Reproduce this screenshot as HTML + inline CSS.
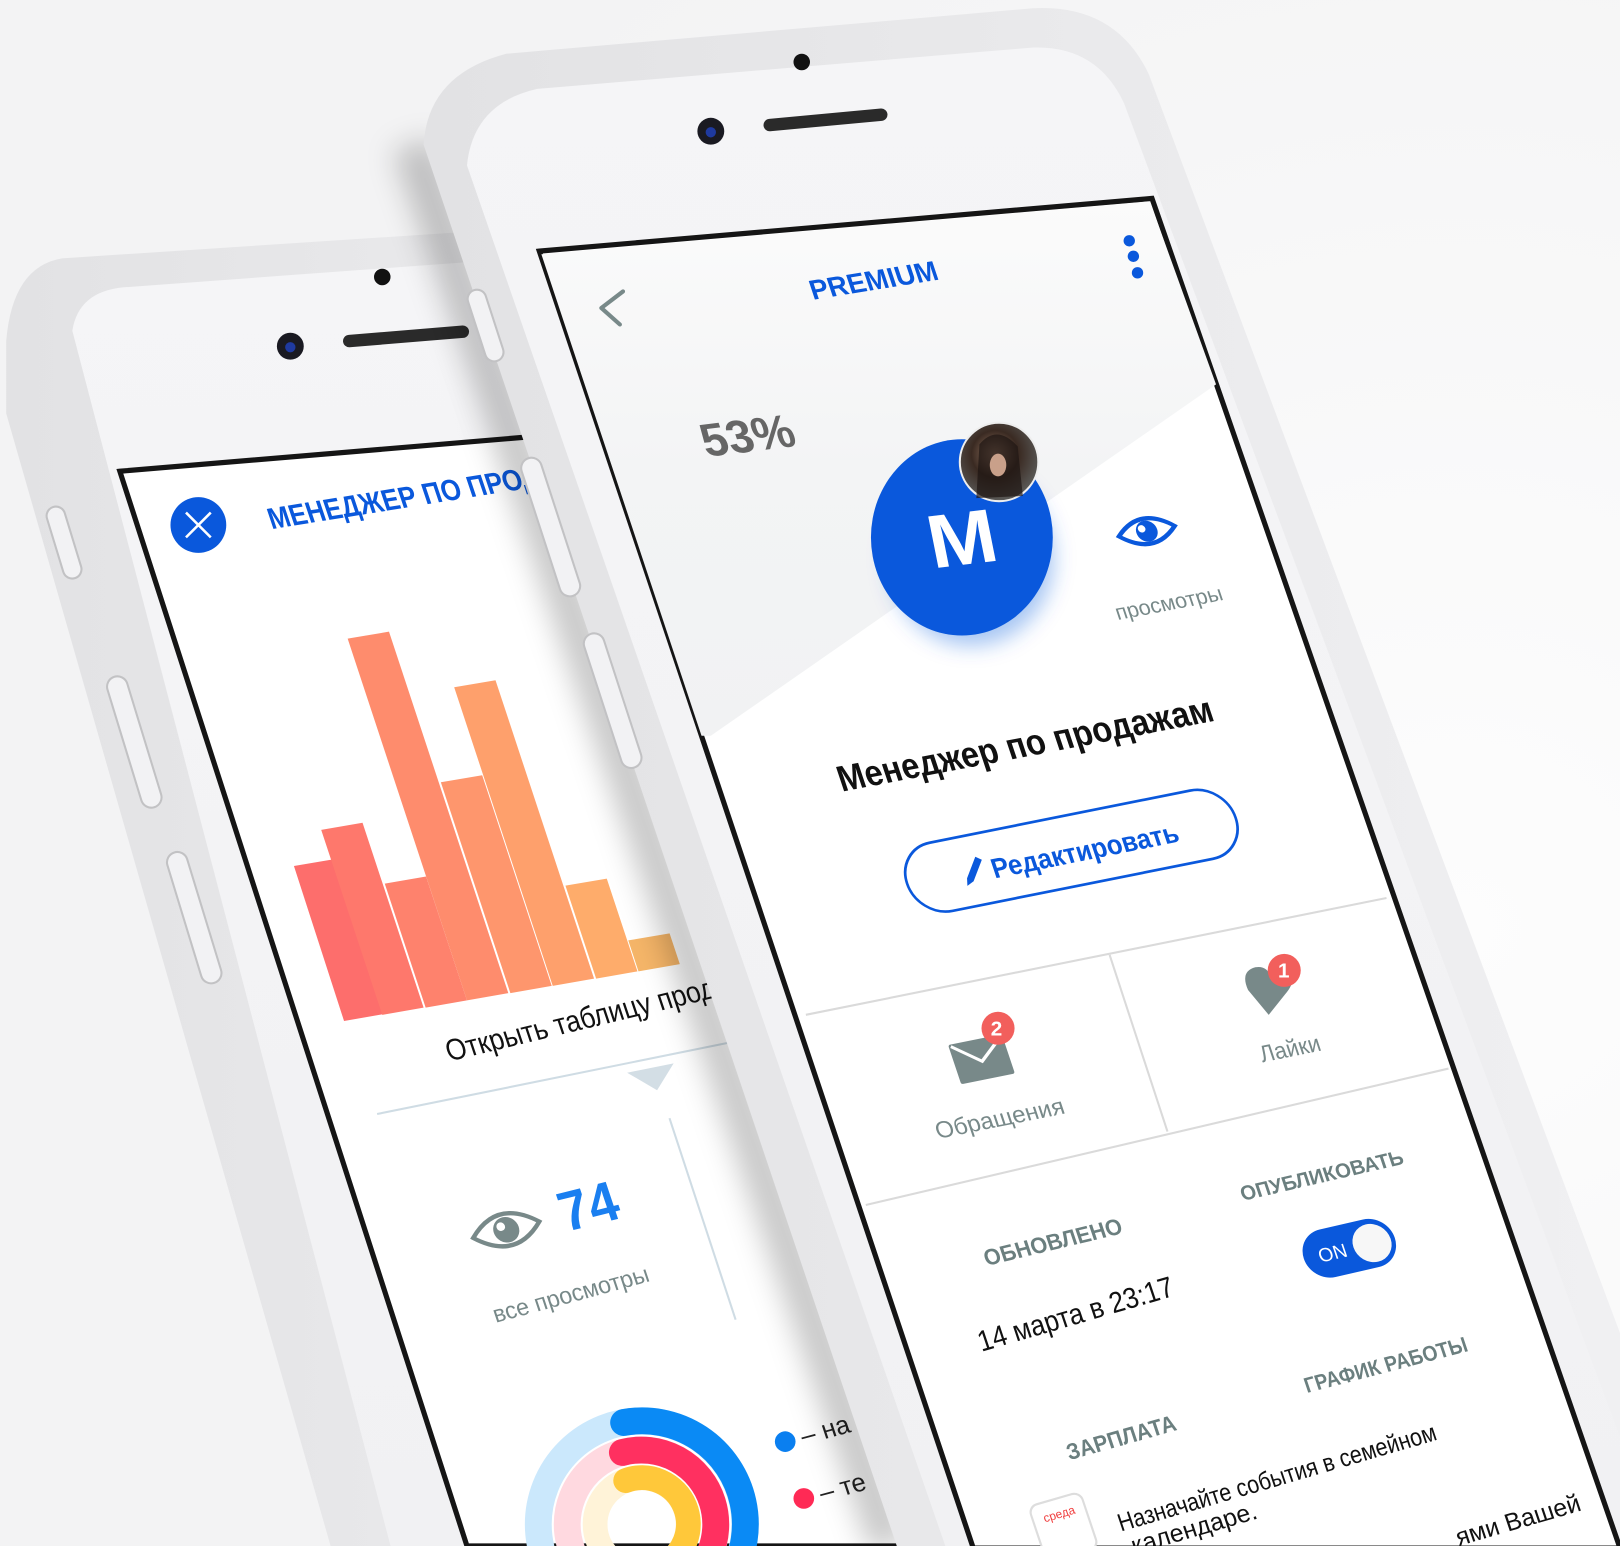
<!DOCTYPE html>
<html><head><meta charset="utf-8"><style>
html,body{margin:0;padding:0;background:#f5f5f6;width:1620px;height:1546px;overflow:hidden;}
svg{display:block;overflow:hidden;}
text{font-family:"Liberation Sans",sans-serif;}
</style></head><body>
<svg width="1620" height="1546" viewBox="0 0 1568 1496" preserveAspectRatio="none" xmlns="http://www.w3.org/2000/svg">
<defs>
<clipPath id="frame"><rect width="1568" height="1496"/></clipPath>
<radialGradient id="bg" cx="0.9" cy="0.6" r="0.8"><stop offset="0" stop-color="#fdfdfd"/><stop offset="1" stop-color="#f3f3f4"/></radialGradient>
<linearGradient id="body" x1="0" y1="0" x2="1" y2="0"><stop offset="0" stop-color="#e2e2e4"/><stop offset="1" stop-color="#f0f0f2"/></linearGradient>
<linearGradient id="face" x1="0" y1="0" x2="0" y2="1"><stop offset="0" stop-color="#f5f5f7"/><stop offset="1" stop-color="#f1f1f3"/></linearGradient>
<linearGradient id="grey" x1="0" y1="0" x2="0" y2="1"><stop offset="0" stop-color="#fbfbfb"/><stop offset="0.5" stop-color="#f3f4f5"/><stop offset="1" stop-color="#f1f2f3"/></linearGradient>
<filter id="blur" x="-50%" y="-10%" width="200%" height="120%"><feGaussianBlur stdDeviation="14"/></filter>
<filter id="sh" x="-30%" y="-30%" width="160%" height="160%"><feGaussianBlur stdDeviation="10"/></filter>
<radialGradient id="ava" cx="0.45" cy="0.4" r="0.6"><stop offset="0" stop-color="#9a7a66"/><stop offset="0.5" stop-color="#3a2a22"/><stop offset="1" stop-color="#5a5a58"/></radialGradient>
</defs>
<g clip-path="url(#frame)">
<rect width="1568" height="1496" fill="url(#bg)"/>

<path d="M60,250 Q12,258 6,330 L6,400 L320,1496 L900,1496 L640,212 Z" fill="url(#body)"/>
<path d="M70,320 Q76,282 120,278 L640,240 L900,1496 L378,1496 Z" fill="url(#face)"/>
<g fill="#f2f2f4" stroke="#c2c2c4" stroke-width="2">
<rect x="-9" y="-36" width="18" height="72" rx="9" transform="translate(62,525) rotate(-17)"/>
<rect x="-10" y="-66" width="20" height="132" rx="10" transform="translate(130,718) rotate(-17)"/>
<rect x="-10" y="-66" width="20" height="132" rx="10" transform="translate(188,888) rotate(-17)"/>
</g>
<circle cx="370" cy="268" r="8" fill="#111"/>
<circle cx="281" cy="335" r="13" fill="#1a1a22"/><circle cx="281" cy="336" r="5" fill="#1f3aa0"/>
<line x1="338" y1="330" x2="448" y2="321" stroke="#2a2a2a" stroke-width="12" stroke-linecap="round"/>
<path d="M116,456 L640,412 L1000,1496 L452,1496 Z" fill="#fff" stroke="#151515" stroke-width="5"/>
<circle cx="192" cy="508" r="27" fill="#0a58dc"/>
<path d="M180,496 L204,520 M204,496 L180,520" stroke="#fff" stroke-width="2.5"/>
<text transform="matrix(1 -0.16 0.335 1 263 512)" font-size="28" font-weight="bold" fill="#0a58dc" textLength="340" lengthAdjust="spacingAndGlyphs">МЕНЕДЖЕР ПО ПРОДАЖАМ</text>
<g>
<polygon points="333,988 284.5,838 324.5,831.2 373,981" fill="#fd6e6c"/>
<polygon points="370,982 310.9,803 350.9,796.2 410,975" fill="#fe786c"/>
<polygon points="412,975 372.4,855 412.4,848.2 452,968" fill="#fe826d"/>
<polygon points="452,968 336.5,618 376.5,611.2 492,961" fill="#fe8c6d"/>
<polygon points="494,961 426.7,757 466.7,750.2 534,954" fill="#fe966d"/>
<polygon points="535,954 439.6,665 479.6,658.2 575,947" fill="#fea06c"/>
<polygon points="577,947 547.3,857 587.3,850.2 617,940" fill="#feac6b"/>
<polygon points="618,940 608.1,910 648.1,903.2 658,933" fill="#f5b568"/>
</g>
<text transform="matrix(1 -0.24 0.335 1 435 1027)" font-size="28" fill="#111" textLength="290" lengthAdjust="spacingAndGlyphs">Открыть таблицу продаж</text>
<line x1="365" y1="1078" x2="720" y2="1006" stroke="#cfdce4" stroke-width="2"/>
<polygon points="607,1038 652,1029 636,1055" fill="#d3dee5"/>
<line x1="648" y1="1082" x2="712" y2="1277" stroke="#cfdce4" stroke-width="2"/>
<g transform="matrix(1 -0.25 0.335 1 490 1190)">
<path d="M-32,0 Q0,-30 32,0 Q0,30 -32,0 Z" fill="none" stroke="#788989" stroke-width="4"/>
<circle cx="0" cy="0" r="12" fill="#788989"/><circle cx="-4" cy="-4" r="4" fill="#fff"/>
</g>
<text transform="matrix(1 -0.25 0.335 1 548 1192)" font-size="52" font-weight="bold" fill="#1a7ff0" textLength="55" lengthAdjust="spacingAndGlyphs">74</text>
<text transform="matrix(1 -0.27 0.335 1 480 1280)" font-size="22" fill="#788989" textLength="150" lengthAdjust="spacingAndGlyphs">все просмотры</text>
<g fill="none">
<circle cx="621" cy="1475" r="100" stroke="#cbe8fc" stroke-width="26"/>
<circle cx="621" cy="1475" r="72" stroke="#ffd9e0" stroke-width="26"/>
<circle cx="621" cy="1475" r="45" stroke="#fff3d8" stroke-width="24"/>
<path d="M603.6,1376.5 A100,100 0 0 1 646.9,1571.6" stroke="#0a8af5" stroke-width="26" stroke-linecap="round"/>
<path d="M602.4,1405.5 A72,72 0 0 1 645.6,1542.7" stroke="#ff3060" stroke-width="26" stroke-linecap="round"/>
<path d="M605.6,1432.7 A45,45 0 0 1 640,1515.8" stroke="#ffc83a" stroke-width="24" stroke-linecap="round"/>
</g>
<circle cx="760" cy="1395" r="10" fill="#0a7ff0"/>
<circle cx="778" cy="1450" r="10" fill="#ff2a55"/>
<text transform="matrix(1 -0.27 0.335 1 778 1398)" font-size="24" fill="#222">– на</text>
<text transform="matrix(1 -0.27 0.335 1 796 1453)" font-size="24" fill="#222">– те</text>

<line x1="400" y1="140" x2="862" y2="1496" stroke="rgba(0,0,0,0.22)" stroke-width="40" filter="url(#blur)"/>

<path d="M410,140 Q414,72 490,52 L1000,8 Q1080,4 1112,72 L1568,1290 L1568,1496 L868,1496 Z" fill="url(#body)"/>
<path d="M452,160 Q458,100 520,86 L1000,46 Q1062,44 1088,100 L1568,1390 L1568,1496 L915,1496 Z" fill="url(#face)"/>
<g fill="#f2f2f4" stroke="#c2c2c4" stroke-width="2">
<rect x="-9" y="-36" width="18" height="72" rx="9" transform="translate(470,315) rotate(-18)"/>
<rect x="-10" y="-70" width="20" height="140" rx="10" transform="translate(533,510) rotate(-18)"/>
<rect x="-10" y="-68" width="20" height="136" rx="10" transform="translate(593,678) rotate(-18)"/>
</g>
<circle cx="776" cy="60" r="8" fill="#111"/>
<circle cx="688" cy="127" r="13" fill="#1a1a22"/><circle cx="688" cy="128" r="5" fill="#1f3aa0"/>
<line x1="745" y1="121" x2="853" y2="111" stroke="#2a2a2a" stroke-width="12" stroke-linecap="round"/>
<path d="M522,243 L1115,192 L1568,1498 L942,1498 Z" fill="#fff" stroke="#151515" stroke-width="5"/>
<polygon points="524,246 1113,195 1177,372 688,712 679,712" fill="url(#grey)"/>
<path d="M603,282 L582,298 L600,314" fill="none" stroke="#788989" stroke-width="4" stroke-linecap="round" stroke-linejoin="round"/>
<text transform="matrix(1 -0.16 0.335 1 787 290)" font-size="26" font-weight="bold" fill="#0a58dc" textLength="123" lengthAdjust="spacingAndGlyphs">PREMIUM</text>
<circle cx="1093" cy="233" r="5.5" fill="#0a58dc"/><circle cx="1097" cy="248" r="5.5" fill="#0a58dc"/><circle cx="1101" cy="264" r="5.5" fill="#0a58dc"/>
<text transform="matrix(1 -0.12 0.335 1 684 442)" font-size="44" font-weight="bold" fill="#666" textLength="89" lengthAdjust="spacingAndGlyphs">53%</text>
<ellipse cx="940" cy="540" rx="80" ry="85" fill="rgba(10,88,220,0.35)" filter="url(#sh)"/>
<ellipse cx="931" cy="520" rx="88" ry="95" fill="#0a58dc"/>
<text transform="matrix(1 -0.12 0.2 1 903 550)" font-size="72" font-weight="bold" fill="#fff" textLength="66" lengthAdjust="spacingAndGlyphs">M</text>
<circle cx="967" cy="447" r="38" fill="url(#ava)" stroke="#eee" stroke-width="2"/>
<path d="M948,430 Q965,410 985,432 L990,480 L945,482 Z" fill="#1e1612" opacity="0.7"/>
<ellipse cx="966" cy="450" rx="8" ry="11" fill="#c9a08a"/>
<g transform="matrix(1 -0.19 0.335 1 1110 514)">
<path d="M-27,0 Q0,-24 27,0 Q0,24 -27,0 Z" fill="none" stroke="#0a58dc" stroke-width="4"/>
<circle cx="0" cy="0" r="10" fill="#0a58dc"/><circle cx="-4" cy="-3" r="3.5" fill="#fff"/>
</g>
<text transform="matrix(1 -0.19 0.335 1 1082 600)" font-size="20" fill="#788989" textLength="103" lengthAdjust="spacingAndGlyphs">просмотры</text>
<text transform="matrix(1 -0.19 0.335 1 815 766)" font-size="34" font-weight="bold" fill="#111" textLength="362" lengthAdjust="spacingAndGlyphs">Менеджер по продажам</text>
<g transform="matrix(1 -0.2 0.335 1 878 855)">
<rect x="0" y="-33" width="318" height="66" rx="33" fill="none" stroke="#0a58dc" stroke-width="2.5"/>
<path d="M56,6 L70,-12 L75,-8 L61,10 L54,13 Z" fill="#0a58dc"/>
</g>
<text transform="matrix(1 -0.2 0.335 1 963 850)" font-size="26" font-weight="bold" fill="#0a58dc" textLength="180" lengthAdjust="spacingAndGlyphs">Редактировать</text>
<line x1="780" y1="982" x2="1342" y2="869" stroke="#dadada" stroke-width="2"/>
<line x1="1074" y1="924" x2="1130" y2="1095" stroke="#dadada" stroke-width="2"/>
<line x1="838" y1="1166" x2="1402" y2="1034" stroke="#dadada" stroke-width="2"/>
<g transform="matrix(1 -0.2 0.335 1 950 1025)">
<rect x="-26" y="-19" width="52" height="38" rx="2" fill="#788989"/>
<path d="M-24,-17 L0,2 L24,-17" fill="none" stroke="#fff" stroke-width="3"/>
</g>
<circle cx="966" cy="995" r="16" fill="#f25f5c"/>
<text x="959" y="1002" font-size="20" font-weight="bold" fill="#fff">2</text>
<text transform="matrix(1 -0.2 0.335 1 908 1102)" font-size="22" fill="#788989" textLength="124" lengthAdjust="spacingAndGlyphs">Обращения</text>
<path d="M1228,982 L1208,958 Q1200,940 1215,936 Q1226,934 1230,945 Q1238,930 1248,938 Q1256,948 1244,962 Z" fill="#788989"/>
<circle cx="1243" cy="939" r="16" fill="#f25f5c"/>
<text x="1237" y="946" font-size="20" font-weight="bold" fill="#fff">1</text>
<text transform="matrix(1 -0.2 0.335 1 1222 1028)" font-size="22" fill="#788989" textLength="58" lengthAdjust="spacingAndGlyphs">Лайки</text>
<text transform="matrix(1 -0.23 0.335 1 1203 1162)" font-size="19" font-weight="bold" fill="#6b7f7f" textLength="157" lengthAdjust="spacingAndGlyphs">ОПУБЛИКОВАТЬ</text>
<g transform="matrix(1 -0.23 0.335 1 1262 1218)">
<rect x="0" y="-23" width="88" height="46" rx="23" fill="#0a58dc"/>
<circle cx="66" cy="0" r="18" fill="#f7f7f7"/>
<text x="14" y="7" font-size="18" fill="#fff">ON</text>
</g>
<text transform="matrix(1 -0.24 0.335 1 955 1225)" font-size="21" font-weight="bold" fill="#6b7f7f" textLength="133" lengthAdjust="spacingAndGlyphs">ОБНОВЛЕНО</text>
<text transform="matrix(1 -0.29 0.335 1 950 1308)" font-size="27" fill="#111" textLength="188" lengthAdjust="spacingAndGlyphs">14 марта в 23:17</text>
<text transform="matrix(1 -0.26 0.335 1 1265 1348)" font-size="20" font-weight="bold" fill="#6b7f7f" textLength="157" lengthAdjust="spacingAndGlyphs">ГРАФИК РАБОТЫ</text>
<text transform="matrix(1 -0.28 0.335 1 1035 1413)" font-size="21" font-weight="bold" fill="#6b7f7f" textLength="105" lengthAdjust="spacingAndGlyphs">ЗАРПЛАТА</text>
<g transform="matrix(1 -0.29 0.335 1 1000 1472)">
<rect x="0" y="-14" width="50" height="54" rx="8" fill="#fff" stroke="#ddd" stroke-width="2"/>
<text x="10" y="4" font-size="11" fill="#f03c3c">среда</text>
</g>
<text transform="matrix(1 -0.29 0.335 1 1085 1482)" font-size="23" fill="#111" textLength="307" lengthAdjust="spacingAndGlyphs">Назначайте события в семейном</text>
<text transform="matrix(1 -0.29 0.335 1 1098 1504)" font-size="23" fill="#111">календаре.</text>
<text transform="matrix(1 -0.29 0.335 1 1412 1496)" font-size="23" fill="#111">ями Вашей</text>
</g>
</svg>
</body></html>
